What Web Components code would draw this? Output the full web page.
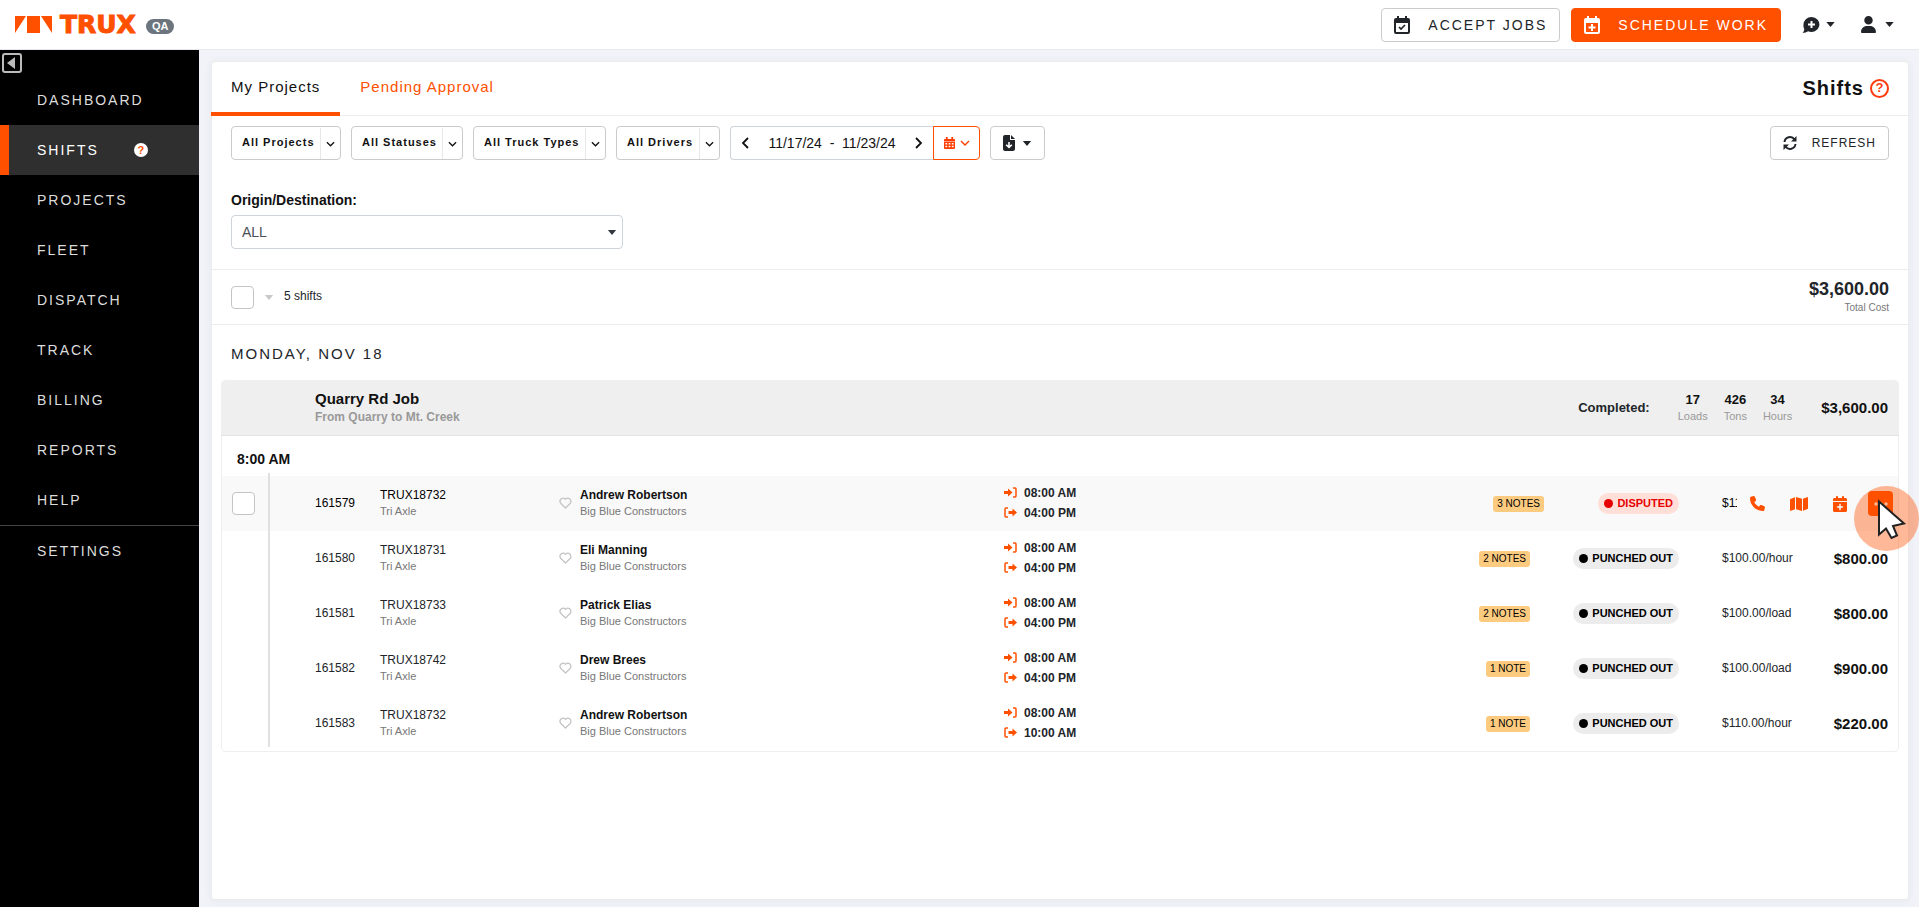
<!DOCTYPE html>
<html lang="en">
<head>
<meta charset="utf-8">
<meta name="viewport" content="width=device-width, initial-scale=1">
<title>TRUX - Shifts</title>
<style>
  html { --orange: #ff5000; --ink: #212529; --line: #ececec; --field: #c9cbcd; --muted: #777; }
  body { margin: 0; background: #f2f3f8; color: var(--ink); font: 14px/20px "Liberation Sans", Arial, sans-serif; }
</style>
</head>
<body>
<trux-app></trux-app>
<script>
const define = (name, html, setup) => {
  const template = document.createElement('template');
  template.innerHTML = html;
  customElements.define(name, class extends HTMLElement {
    constructor() {
      super();
      this.attachShadow({ mode: 'open' }).append(template.content.cloneNode(true));
    }
    connectedCallback() { if (setup) setup(this, this.shadowRoot); }
  });
};

const ICONS = {
  caret: ['0 0 10 6', '<path d="M0 0h10L5 6z"/>'],
  down: ['0 0 10 6', '<path d="M1 1l4 4 4-4" fill="none" stroke="currentColor" stroke-width="1.400"/>'],
  prev: ['0 0 8 12', '<path d="M7 1L2 6l5 5" fill="none" stroke="currentColor" stroke-width="1.800"/>'],
  next: ['0 0 8 12', '<path d="M1 1l5 5-5 5" fill="none" stroke="currentColor" stroke-width="1.800"/>'],
  calcheck: ['0 0 16 18', '<path fill-rule="evenodd" d="M3 0h2v2h6V0h2v2h1a2 2 0 0 1 2 2v12a2 2 0 0 1-2 2H2a2 2 0 0 1-2-2V4a2 2 0 0 1 2-2h1zM2 7v9h12V7z"/><path d="M5 11l2 2 4-4" fill="none" stroke="currentColor" stroke-width="1.7"/>'],
  calplusline: ['0 0 16 18', '<path fill-rule="evenodd" d="M3 0h2v2h6V0h2v2h1a2 2 0 0 1 2 2v12a2 2 0 0 1-2 2H2a2 2 0 0 1-2-2V4a2 2 0 0 1 2-2h1zM2 7v9h12V7z"/><path d="M8 8v7M4.500 11.500h7" fill="none" stroke="currentColor" stroke-width="2"/>'],
  calplus: ['0 0 448 512', '<path d="M96 32V64H48C21.500 64 0 85.500 0 112v48H448V112c0-26.500-21.500-48-48-48H352V32c0-17.700-14.300-32-32-32s-32 14.300-32 32V64H160V32c0-17.700-14.300-32-32-32S96 14.300 96 32zM448 192H0V464c0 26.500 21.500 48 48 48H400c26.500 0 48-21.500 48-48V192zM224 248c13.300 0 24 10.700 24 24v56h56c13.300 0 24 10.700 24 24s-10.700 24-24 24H248v56c0 13.300-10.700 24-24 24s-24-10.700-24-24V376H144c-13.300 0-24-10.700-24-24s10.700-24 24-24h56V272c0-13.300 10.700-24 24-24z"/>'],
  calgrid: ['0 0 12 13', '<path fill-rule="evenodd" d="M2 0h2v2h4V0h2v2h1a1 1 0 0 1 1 1v1.500H0V3a1 1 0 0 1 1-1h1zM0 5h12v7a1 1 0 0 1-1 1H1a1 1 0 0 1-1-1zM1.500 6.500v1.500h2V6.500zm3.500 0v1.500h2V6.500zm3.500 0v1.500h2V6.500zM1.500 9.500v1.500h2V9.500zm3.500 0v1.500h2V9.500zm3.500 0v1.500h2V9.500z"/>'],
  comment: ['0 0 17 16', '<path fill-rule="evenodd" d="M9 0a8 7.500 0 1 1-3.500 14.300C4 15.300 2 16 0 16c1-1 1.700-2.300 1.800-3.800A7.300 7.300 0 0 1 1 7.500 8 7.500 0 0 1 9 0zM8 4v2.500H5.500v2H8V11h2V8.500h2.500v-2H10V4z"/>'],
  user: ['0 0 448 512', '<path d="M224 256A128 128 0 1 0 224 0a128 128 0 1 0 0 256zm-45.700 48C79.800 304 0 383.800 0 482.300C0 498.700 13.300 512 29.700 512H418.300c16.400 0 29.700-13.300 29.700-29.700C448 383.800 368.200 304 269.700 304H178.300z"/>'],
  phone: ['0 0 512 512', '<path d="M164.900 24.600c-7.700-18.600-28-28.500-47.400-23.200l-88 24C12.100 30.200 0 46 0 64C0 311.400 200.600 512 448 512c18 0 33.800-12.100 38.600-29.500l24-88c5.300-19.400-4.600-39.700-23.200-47.400l-96-40c-16.300-6.800-35.200-2.100-46.300 11.600L304.700 368C234.300 334.700 177.300 277.700 144 207.300L193.300 167c13.700-11.200 18.400-30 11.600-46.300l-40-96z"/>'],
  map: ['0 32 576 448', '<path d="M384 476.100L192 421.200V35.900L384 90.800V476.100zm32-1.200V88.400L543.100 37.500c15.800-6.300 32.900 5.300 32.900 22.300V394.600c0 9.800-6 18.600-15.100 22.300L416 474.800zM15.100 95.100L160 37.200V423.600L32.900 474.500C17.100 480.800 0 469.200 0 452.200V117.400c0-9.800 6-18.600 15.100-22.300z"/>'],
  dots: ['0 0 14 4', '<circle cx="2" cy="2" r="1.700"/><circle cx="7" cy="2" r="1.700"/><circle cx="12" cy="2" r="1.700"/>'],
  sync: ['0 0 14 14', '<path d="M1.500 6A5.500 5.500 0 0 1 11.500 3.500M12.500 8A5.500 5.500 0 0 1 2.500 10.500" fill="none" stroke="currentColor" stroke-width="2"/><path d="M13.500 0v5.500H8zM.5 14V8.500H6z"/>'],
  file: ['0 0 12 16', '<path fill-rule="evenodd" d="M2 0h5v5h5v9a2 2 0 0 1-2 2H2a2 2 0 0 1-2-2V2a2 2 0 0 1 2-2zM5.200 7v3.600L3.700 9.200 2.600 10.300 6 13.600l3.400-3.300-1.100-1.100-1.500 1.400V7z"/><path d="M8 0l4 4H8z"/>'],
  heart: ['0 0 14 13', '<path d="M7 12L2 7A3.300 3.300 0 0 1 7 2.500 3.300 3.300 0 0 1 12 7z" fill="none" stroke="currentColor" stroke-width="1.400" stroke-linejoin="round"/>'],
  signin: ['0 0 13 11', '<path d="M0 4h4V1.500l4.500 4-4.500 4V7H0z"/><path d="M9 1h2a1 1 0 0 1 1 1v7a1 1 0 0 1-1 1H9" fill="none" stroke="currentColor" stroke-width="1.500"/>'],
  signout: ['0 0 13 11', '<path d="M4.500 4h4V1.500l4.500 4-4.500 4V7h-4z"/><path d="M4 1H2a1 1 0 0 0-1 1v7a1 1 0 0 0 1 1h2" fill="none" stroke="currentColor" stroke-width="1.500"/>'],
  collapse: ['0 0 20 20', '<rect x="1" y="1" width="18" height="18" rx="2" fill="none" stroke="currentColor" stroke-width="2"/><path d="M13 4v12L5 10z"/>'],
  mark: ['0 0 37 17', '<path d="M0 0h11L0 17zM12 0h13v17H12zM26 0h11v17z"/>'],
  pointer: ['0 0 30 41', '<path d="M2 2.500v33l7-6 5.500 9.500 5.500-2.500-4-9.500 11-2.500z" fill="#fff" stroke="#222" stroke-width="2"/>']
};

define('ui-icon', `
  <style>:host { display: inline-flex; flex: none } svg { display: block; fill: currentColor }</style>
  <svg aria-hidden="true"></svg>`, (el, root) => {
  const [box, body] = ICONS[el.getAttribute('name')];
  const svg = root.querySelector('svg');
  svg.setAttribute('viewBox', box);
  svg.setAttribute('width', el.getAttribute('w'));
  svg.setAttribute('height', el.getAttribute('h'));
  svg.innerHTML = body;
});

define('help-mark', `
  <style>
    :host { display: inline-flex; flex: none; box-sizing: border-box; width: 14px; height: 14px; border-radius: 50%;
      align-items: center; justify-content: center; background: #fff; color: var(--orange); font: bold 11px/14px "Liberation Sans", sans-serif; letter-spacing: 0 }
    :host([outline]) { width: 19px; height: 19px; border: 2px solid #ff3c10; color: #ff3c10; font-size: 13px }
  </style>?`);

define('action-button', `
  <style>
    :host { display: inline-flex }
    button { box-sizing: border-box; height: 34px; display: flex; align-items: center; padding: 0 12px; border: 1px solid var(--field);
      border-radius: 4px; background: #fff; color: var(--ink); font: 14px/20px "Liberation Sans", sans-serif; letter-spacing: 2px; gap: 18px; cursor: pointer }
    :host([primary]) button { background: var(--orange); border-color: var(--orange); color: #fff }
    :host([small]) button { font-size: 12px; letter-spacing: 1px; gap: 15px }
    :host([compact]) button { gap: 7px }
  </style>
  <button type="button"><slot name="icon"></slot><slot></slot></button>`);

define('filter-select', `
  <style>
    :host { display: inline-flex; position: relative; height: 34px; box-sizing: border-box; border: 1px solid var(--field); border-radius: 4px; background: #fff; color: #111 }
    select { appearance: none; border: 0; outline: 0; background: none; color: inherit; margin: 0; padding: 0 25px 2px 10px; font: bold 11px/20px "Liberation Sans", sans-serif; letter-spacing: 1px }
    span { position: absolute; right: 0; top: 1px; bottom: 0; width: 19px; border-left: 1px solid #e8e8e8; display: flex; align-items: center; justify-content: center; pointer-events: none }
  </style>
  <select><option></option></select><span><ui-icon name="down" w="9" h="6"></ui-icon></span>`, (el, root) => {
  root.querySelector('option').textContent = el.getAttribute('value');
  root.querySelector('select').setAttribute('aria-label', el.getAttribute('label'));
});

define('date-range', `
  <style>
    :host { display: inline-flex; height: 34px }
    .range { display: flex; align-items: center; box-sizing: border-box; border: 1px solid #ced4da; border-right: 0; border-radius: 4px 0 0 4px; color: #111; white-space: pre; width: 203px; justify-content: space-between; padding: 0 10px }
    button { border: 0; background: none; padding: 0; display: flex; align-items: center; color: inherit; font: inherit }
    .pick { box-sizing: border-box; width: 47px; border: 1px solid var(--orange); border-radius: 0 4px 4px 0; color: #ff3c00; justify-content: center; gap: 5px }
  </style>
  <div class="range">
    <button type="button" aria-label="Previous week"><ui-icon name="prev" w="8" h="12"></ui-icon></button>
    <span>11/17/24  -  11/23/24</span>
    <button type="button" aria-label="Next week"><ui-icon name="next" w="8" h="12"></ui-icon></button>
  </div>
  <button type="button" class="pick" aria-label="Pick dates"><ui-icon name="calgrid" w="11" h="12"></ui-icon><ui-icon name="down" w="10" h="6"></ui-icon></button>`);

define('app-header', `
  <style>
    :host { display: flex; align-items: center; box-sizing: border-box; height: 50px; padding: 0 25px 0 15px; background: #fff; border-bottom: 1px solid #e6e8ee }
    .brand { display: flex; align-items: center; color: var(--orange); text-decoration: none; font: bold 25px/28px "DejaVu Sans", sans-serif; -webkit-text-stroke: 1px var(--orange) }
    ui-icon[name=mark] { margin-right: 8px }
    .env { margin: 3px 0 0 10px; padding: 0 6px; border-radius: 8px; background: #6c757d; color: #fff; font: bold 11px/15px "Liberation Sans", sans-serif }
    nav { margin-left: auto; display: flex; align-items: center }
    action-button { margin-right: 11px }
    .menu { border: 0; background: none; padding: 0; display: flex; align-items: center; gap: 6px; color: var(--ink); margin-left: 10px }
    .menu.account { gap: 9px; margin-left: 26px }
  </style>
  <a class="brand" href="#"><ui-icon name="mark" w="37" h="17"></ui-icon>TRUX</a><span class="env">QA</span>
  <nav>
    <action-button><ui-icon slot="icon" name="calcheck" w="16" h="18"></ui-icon>ACCEPT JOBS</action-button>
    <action-button primary><ui-icon slot="icon" name="calplusline" w="16" h="18"></ui-icon>SCHEDULE WORK</action-button>
    <button type="button" class="menu" aria-label="Support"><ui-icon name="comment" w="18" h="16"></ui-icon><ui-icon name="caret" w="9" h="5"></ui-icon></button>
    <button type="button" class="menu account" aria-label="Account"><ui-icon name="user" w="15" h="17"></ui-icon><ui-icon name="caret" w="9" h="5"></ui-icon></button>
  </nav>`);

define('nav-item', `
  <style>
    :host { display: block }
    a { box-sizing: border-box; display: flex; align-items: center; height: 50px; padding: 0 10px 0 28px; border-left: 9px solid transparent; gap: 35px;
      color: #ddd; text-decoration: none; font-size: 14px; letter-spacing: 2px }
    :host([active]) a { background: #2f2f2f; border-color: var(--orange); color: #fff }
    :host([divided]) { border-top: 1px solid #444 }
  </style>
  <a href="#"><slot></slot></a>`);

define('side-nav', `
  <style>
    :host { display: block; flex: 0 0 199px; background: #000 }
    button { display: flex; height: 25px; padding: 3px 2px 0; border: 0; background: none; color: #bbb }
  </style>
  <button type="button" aria-label="Collapse menu"><ui-icon name="collapse" w="20" h="20"></ui-icon></button>
  <nav>
    <nav-item>DASHBOARD</nav-item><nav-item active>SHIFTS<help-mark></help-mark></nav-item><nav-item>PROJECTS</nav-item>
    <nav-item>FLEET</nav-item><nav-item>DISPATCH</nav-item><nav-item>TRACK</nav-item><nav-item>BILLING</nav-item>
    <nav-item>REPORTS</nav-item><nav-item>HELP</nav-item><nav-item divided>SETTINGS</nav-item>
  </nav>`);

define('check-box', `
  <style>
    :host { display: inline-flex }
    input { appearance: none; box-sizing: border-box; width: 23px; height: 23px; margin: 0; border: 1px solid #c4c4c4; border-radius: 4px; background: #fff }
  </style>
  <input type="checkbox">`, (el, root) => root.querySelector('input').setAttribute('aria-label', el.getAttribute('label')));

define('status-pill', `
  <style>
    :host { display: inline-flex; align-items: center; gap: 4px; height: 21px; padding: 0 6px; border-radius: 11px; background: #ececec; color: #000; font: bold 11px/21px "Liberation Sans", sans-serif; white-space: nowrap }
    :host([disputed]) { background: #ffdfd7; color: #e60000 }
    i { width: 9px; height: 9px; border-radius: 50%; background: currentColor }
  </style>
  <i></i><slot></slot>`);

define('row-actions', `
  <style>
    :host { display: flex; align-items: center; gap: 16px; padding-left: 8px; background: #f9f9f9; color: var(--orange) }
    button { display: flex; align-items: center; justify-content: center; padding: 0; border: 0; background: none; color: inherit; width: 25px; height: 25px }
    .more { background: var(--orange); color: #fff; border-radius: 4px }
  </style>
  <button type="button" aria-label="Call"><ui-icon name="phone" w="15" h="15"></ui-icon></button>
  <button type="button" aria-label="Map"><ui-icon name="map" w="18" h="14"></ui-icon></button>
  <button type="button" aria-label="Reschedule"><ui-icon name="calplus" w="14" h="16"></ui-icon></button>
  <button type="button" class="more" aria-label="More"><ui-icon name="dots" w="14" h="4"></ui-icon></button>`);

define('click-pointer', `
  <style>
    :host { display: flex; align-items: flex-start; box-sizing: border-box; width: 65px; height: 65px; padding: 13px 0 0 23px; border-radius: 50%; background: rgba(255, 80, 0, .4); pointer-events: none }
  </style>
  <ui-icon name="pointer" w="30" h="41"></ui-icon>`);

const SHIFTS = [
  ['161579', 'TRUX18732', 'Andrew Robertson', '04:00 PM', '3 NOTES', 'DISPUTED', '$110.00/hour', ''],
  ['161580', 'TRUX18731', 'Eli Manning', '04:00 PM', '2 NOTES', 'PUNCHED OUT', '$100.00/hour', '$800.00'],
  ['161581', 'TRUX18733', 'Patrick Elias', '04:00 PM', '2 NOTES', 'PUNCHED OUT', '$100.00/load', '$800.00'],
  ['161582', 'TRUX18742', 'Drew Brees', '04:00 PM', '1 NOTE', 'PUNCHED OUT', '$100.00/load', '$900.00'],
  ['161583', 'TRUX18732', 'Andrew Robertson', '10:00 AM', '1 NOTE', 'PUNCHED OUT', '$110.00/hour', '$220.00']
];

define('shift-table', `
  <style>
    :host { display: block; position: relative }
    :host::before { content: ""; position: absolute; left: 46px; top: -3px; bottom: 4px; width: 2px; background: #e0e0e0; z-index: 1 }
    table { width: 100%; border-collapse: collapse; table-layout: fixed; font-size: 12px; line-height: 16px }
    td { padding: 0; height: 55px; vertical-align: middle; white-space: nowrap }
    tr.current { background: #f9f9f9; color: #000 }
    check-box { margin: 0 0 0 10px; vertical-align: middle }
    .id, .truck, .person { padding-bottom: 2px; height: 53px }
    small { display: block; font-size: 11px; color: var(--muted) }
    .driver { display: grid; grid-template-columns: 13px 1fr; column-gap: 8px; align-items: center }
    .driver button { border: 0; background: none; padding: 0; color: #c4c4c4; display: flex }
    b { color: #111 }
    .time { display: grid; grid-template-columns: 13px auto; gap: 4px 7px; align-items: center; color: var(--ink); font-weight: bold; padding-bottom: 2px }
    .time ui-icon { color: var(--orange) }
    .notes, .status, .cost { text-align: right }
    .notes a { display: inline-block; padding: 0 4px; border-radius: 3px; background: #fccb80; color: #000; text-decoration: none; font-size: 10px; line-height: 16px }
    tr:not(.current) .notes { padding-right: 14px }
    .rate { padding: 0 0 2px 43px; height: 53px }
    .cost { padding-right: 10px; font-size: 15px; font-weight: bold; color: #111 }
    .pos { position: relative }
    row-actions { position: absolute; inset: 0 5px 0 auto }
    click-pointer { position: absolute; right: -21px; top: 10px; z-index: 2 }
  </style>
  <table aria-label="Shifts at 8:00 AM">
    <colgroup><col style="width:93px"><col style="width:65px"><col style="width:179px"><col style="width:445px"><col><col style="width:80px"><col style="width:135px"><col style="width:120px"><col style="width:99px"></colgroup>
    <tbody></tbody>
  </table>`, (el, root) => {
  root.querySelector('tbody').innerHTML = SHIFTS.map((s, i) => {
    const current = i === 0;
    return `<tr class="${current ? 'current' : ''}">
      <td>${current ? '<check-box label="Select shift 161579"></check-box>' : ''}</td>
      <td class="id">${s[0]}</td>
      <td class="truck">${s[1]}<small>Tri Axle</small></td>
      <td class="person"><div class="driver"><button type="button" aria-label="Favorite ${s[2]}"><ui-icon name="heart" w="13" h="12"></ui-icon></button><div><b>${s[2]}</b><small>Big Blue Constructors</small></div></div></td>
      <td><div class="time"><ui-icon name="signin" w="13" h="11"></ui-icon><span>08:00 AM</span><ui-icon name="signout" w="13" h="11"></ui-icon><span>${s[3]}</span></div></td>
      <td class="notes"><a href="#">${s[4]}</a></td>
      <td class="status"><status-pill ${current ? 'disputed' : ''}>${s[5]}</status-pill></td>
      <td class="rate">${s[6]}</td>
      <td class="cost ${current ? 'pos' : ''}">${s[7]}${current ? '<row-actions></row-actions><click-pointer></click-pointer>' : ''}</td></tr>`;
  }).join('');
});

define('shift-group', `
  <style>
    :host { display: block; border: 1px solid #eee; border-top: 0; border-radius: 5px }
    header { display: flex; align-items: center; box-sizing: border-box; height: 56px; margin: 0 -1px; padding: 1px 11px 0 94px; background: #efefef; border-bottom: 1px solid #e2e2e2; border-radius: 5px 5px 0 0 }
    h3 { margin: 0; font-size: 15px; line-height: 18px; color: #111 }
    p { margin: 0; font-size: 12px; line-height: 18px; font-weight: bold; color: #999 }
    dl { margin: 0 29px 0 28px; display: flex; gap: 16px; text-align: center }
    dl div { display: flex; flex-direction: column-reverse }
    dt { font-size: 11px; line-height: 17px; color: #999 }
    dd { margin: 0; font-size: 13px; line-height: 17px; font-weight: bold; color: #111 }
    .done { margin-left: auto; font-size: 13px; font-weight: bold }
    .sum { font-size: 15px; font-weight: bold; color: #111 }
    .hour { height: 40px; box-sizing: border-box; padding: 13px 15px 0; font-weight: bold; color: #111 }
  </style>
  <header>
    <div><h3>Quarry Rd Job</h3><p>From Quarry to Mt. Creek</p></div>
    <span class="done">Completed:</span>
    <dl><div><dt>Loads</dt><dd>17</dd></div><div><dt>Tons</dt><dd>426</dd></div><div><dt>Hours</dt><dd>34</dd></div></dl>
    <span class="sum">$3,600.00</span>
  </header>
  <div class="hour">8:00 AM</div>
  <shift-table></shift-table>`);

define('shifts-panel', `
  <style>
    :host { display: block; box-sizing: border-box; flex: 1; min-width: 0; background: #fff; border: 1px solid var(--line); border-radius: 4px; box-shadow: 0 1px 8px rgba(69, 65, 78, .06) }
    .tabs { display: flex; height: 53px; padding-right: 19px; border-bottom: 1px solid var(--line) }
    .tabs a { box-sizing: border-box; height: 54px; padding: 15px 20px 0; border-bottom: 4px solid transparent; color: var(--orange); text-decoration: none; font-size: 15px; letter-spacing: 1px }
    .tabs a:first-child { color: #111; border-color: var(--orange); margin-left: -1px }
    h1 { margin: 0 0 0 auto; display: flex; align-items: center; gap: 6px; height: 52px; font-size: 20px; letter-spacing: 1px; color: #111 }
    .filters { display: flex; gap: 10px; padding: 10px 19px 0 }
    .filters > :last-child { margin-left: auto }
    .origin { padding: 30px 19px 20px; border-bottom: 1px solid var(--line) }
    label { display: block; margin-bottom: 5px; font-weight: bold; color: #111 }
    .drop { position: relative; width: 392px }
    .drop select { appearance: none; box-sizing: border-box; width: 100%; height: 34px; padding: 0 10px; border: 1px solid #ced4da; border-radius: 4px; background: #fff; color: #495057; font: inherit }
    .drop ui-icon { position: absolute; right: 6px; top: 15px; color: #343a40; pointer-events: none }
    .summary { display: flex; align-items: center; box-sizing: border-box; height: 55px; padding: 0 19px; border-bottom: 1px solid var(--line) }
    .pick { border: 0; background: none; padding: 0; margin: 0 10px; display: flex; color: #c8c8c8 }
    .count { font-size: 12px; padding-bottom: 2px }
    .total { margin-left: auto; padding-bottom: 1px; text-align: right; font-size: 10px; line-height: 14px; color: #777 }
    .total b { display: block; margin-bottom: 1px; font-size: 18px; line-height: 22px; color: #212529 }
    h2 { margin: 0; padding: 19px 19px 16px; font-size: 15px; line-height: 20px; font-weight: normal; letter-spacing: 2px }
    shift-group { margin: 0 9px }
  </style>
  <nav class="tabs"><a href="#">My Projects</a><a href="#">Pending Approval</a><h1>Shifts<help-mark outline></help-mark></h1></nav>
  <div class="filters">
    <filter-select label="Projects" value="All Projects"></filter-select>
    <filter-select label="Statuses" value="All Statuses"></filter-select>
    <filter-select label="Truck types" value="All Truck Types"></filter-select>
    <filter-select label="Drivers" value="All Drivers"></filter-select>
    <date-range></date-range>
    <action-button compact><ui-icon slot="icon" name="file" w="12" h="16"></ui-icon><ui-icon name="caret" w="10" h="5"></ui-icon></action-button>
    <action-button small><ui-icon slot="icon" name="sync" w="14" h="14"></ui-icon>REFRESH</action-button>
  </div>
  <div class="origin">
    <label for="origin">Origin/Destination:</label>
    <div class="drop"><select id="origin"><option>ALL</option></select><ui-icon name="caret" w="10" h="5"></ui-icon></div>
  </div>
  <div class="summary">
    <check-box label="Select all shifts"></check-box>
    <button type="button" class="pick" aria-label="Selection options"><ui-icon name="caret" w="10" h="5"></ui-icon></button>
    <span class="count">5 shifts</span>
    <div class="total"><b>$3,600.00</b>Total Cost</div>
  </div>
  <h2>MONDAY, NOV 18</h2>
  <shift-group></shift-group>`);

define('trux-app', `
  <style>
    :host { display: flex; flex-direction: column; min-height: 100vh }
    .body { display: flex; flex: 1 }
    main { flex: 1; min-width: 0; display: flex; padding: 11px 10px 7px 12px }
  </style>
  <app-header></app-header>
  <div class="body"><side-nav></side-nav><main><shifts-panel></shifts-panel></main></div>`);
</script>
</body>
</html>
